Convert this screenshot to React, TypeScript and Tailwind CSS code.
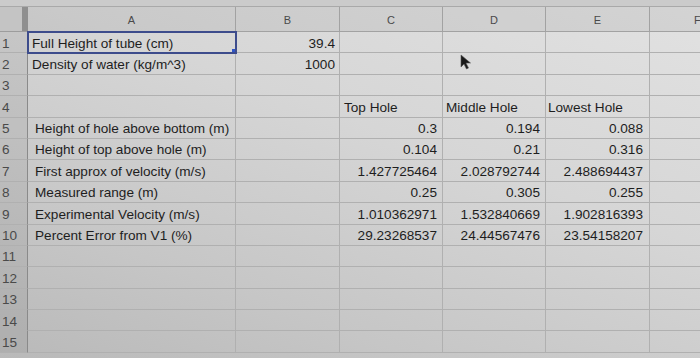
import React from "react";

const rows: { n: number; a: string; b?: string; c?: string; d?: string; e?: string; left?: boolean }[] = [
  { n: 1, a: "Full Height of tube (cm)", b: "39.4" },
  { n: 2, a: "Density of water (kg/m^3)", b: "1000" },
  { n: 3, a: "" },
  { n: 4, a: "", c: "Top Hole", d: "Middle Hole", e: "Lowest Hole", left: true },
  { n: 5, a: "Height of hole above bottom (m)", c: "0.3", d: "0.194", e: "0.088" },
  { n: 6, a: "Height of top above hole (m)", c: "0.104", d: "0.21", e: "0.316" },
  { n: 7, a: "First approx of velocity (m/s)", c: "1.427725464", d: "2.028792744", e: "2.488694437" },
  { n: 8, a: "Measured range (m)", c: "0.25", d: "0.305", e: "0.255" },
  { n: 9, a: "Experimental Velocity (m/s)", c: "1.010362971", d: "1.532840669", e: "1.902816393" },
  { n: 10, a: "Percent Error from V1 (%)", c: "29.23268537", d: "24.44567476", e: "23.54158207" },
  { n: 11, a: "" },
  { n: 12, a: "" },
  { n: 13, a: "" },
  { n: 14, a: "" },
  { n: 15, a: "" },
];

const cell = "h-[21.4px] pt-[3px] border-r border-b border-[#b0b0b0] flex items-center text-[13.6px] text-[#1e1e1e] overflow-hidden whitespace-nowrap";

export default function App() {
  return (
    <div
      className="relative w-[700px] h-[358px] overflow-hidden"
      style={{ fontFamily: '"Liberation Sans", Arial, sans-serif', background: "linear-gradient(200deg, #e2e2e2 0%, #d6d6d6 40%, #c6c6c6 75%, #b9b9b9 100%)" }}
    >
      <div className="h-[7px] bg-[#cbcbcb] border-b border-[#a9a9a9]" />
      <div className="grid grid-cols-[22px_6px_208px_104px_103px_103px_104px_100px]">
        {/* header */}
        <div className="h-[25px] bg-[#c4c4c4] border-b border-[#9d9d9d]" />
        <div className="h-[25px] bg-[#8f8f8f] border-b border-[#9d9d9d]" />
        {["A", "B", "C", "D", "E"].map((l) => (
          <div key={l} className="h-[25px] pt-[2px] bg-black/[0.06] border-r border-b border-[#a2a2a2] flex items-center justify-center text-[11px] text-[#4a4a4a]">
            {l}
          </div>
        ))}
        <div className="h-[25px] pt-[2px] pl-[44px] bg-black/[0.06] border-b border-[#a2a2a2] flex items-center text-[11px] text-[#4a4a4a]">F</div>
        {rows.map((r) => (
          <React.Fragment key={r.n}>
            <div className={`col-span-2 ${cell} bg-black/[0.06] border-r-[#8a8a8a] text-[10px] text-[#4a4a4a] pl-[2px]`}>{r.n}</div>
            <div className={`${cell} ${r.n <= 2 ? "pl-[4px]" : "pl-[7px]"} ${r.n === 1 ? "relative outline outline-2 -outline-offset-1 outline-[#3d4c8c]" : ""}`}>
              {r.a}
              {r.n === 1 && <div className="absolute right-[-4px] bottom-[-4px] w-[7px] h-[7px] bg-[#2f55c9] z-10" />}
            </div>
            <div className={`${cell} justify-end pr-[4px]`}>{r.b}</div>
            <div className={`${cell} ${r.left ? "pl-[4px]" : "justify-end pr-[5px]"}`}>{r.c}</div>
            <div className={`${cell} ${r.left ? "pl-[3px]" : "justify-end pr-[5px]"}`}>{r.d}</div>
            <div className={`${cell} ${r.left ? "pl-[2px]" : "justify-end pr-[6px]"}`}>{r.e}</div>
            <div className={cell} />
          </React.Fragment>
        ))}
      </div>
      <svg className="absolute left-[460px] top-[54px]" width="12" height="16" viewBox="0 0 12 16">
        <path d="M1 1 L1 13 L4 10 L6.5 15 L8.5 14 L6 9 L10.5 9 Z" fill="#1a1a1a" stroke="#555" strokeWidth="0.6" />
      </svg>
    </div>
  );
}
